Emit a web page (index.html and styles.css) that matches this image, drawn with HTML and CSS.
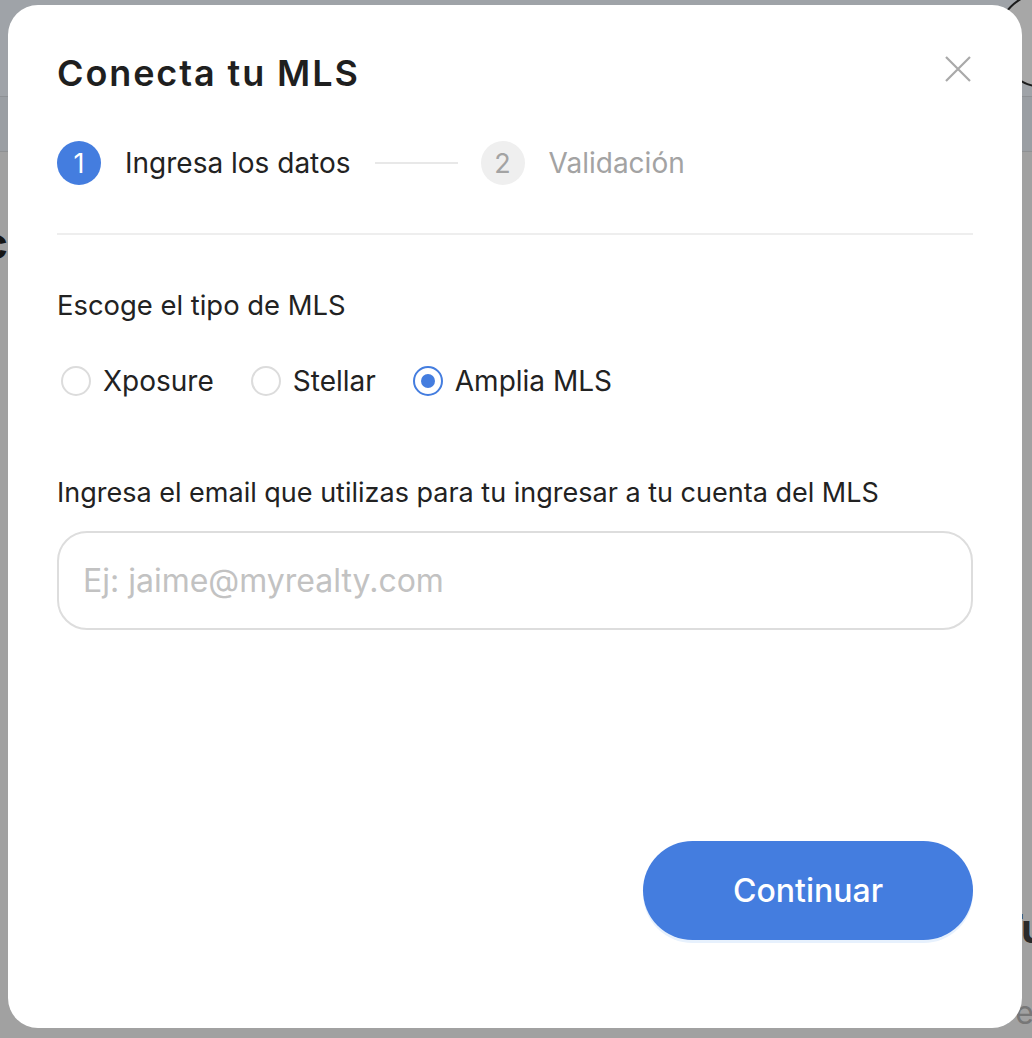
FILE: index.html
```html
<!DOCTYPE html>
<html lang="es">
<head>
    <meta charset="UTF-8">
    <meta name="viewport" content="width=device-width, initial-scale=1.0">
    <title>Conecta tu MLS</title>
    <link rel="stylesheet" href="styles.css">
</head>
<body>
    <div class="page">
        <header class="topbar">
            <span class="avatar"></span>
        </header>
        <nav class="subnav"></nav>
        <main class="page-main">
            <h2 class="page-title">Conexiones MLS c</h2>
            <div class="page-side">
                <strong class="side-title">Tu</strong>
                <span class="side-text">Ver</span>
            </div>
        </main>
    </div>

    <div class="overlay">
        <div class="modal">
            <div class="modal-header">
                <h1>Conecta tu MLS</h1>
                <button class="close" aria-label="Cerrar">
                    <svg width="26" height="26" viewBox="0 0 26 26">
                        <path d="M1 1 L25 25 M25 1 L1 25" stroke="#a9a9a9" stroke-width="2.2" fill="none"/>
                    </svg>
                </button>
            </div>

            <div class="stepper">
                <span class="step-num active">1</span>
                <span class="step-label">Ingresa los datos</span>
                <span class="step-line"></span>
                <span class="step-num">2</span>
                <span class="step-label muted">Validación</span>
            </div>

            <div class="form">
                <p class="field-label">Escoge el tipo de MLS</p>
                <div class="radios">
                    <label class="radio"><span class="dot"></span>Xposure</label>
                    <label class="radio"><span class="dot"></span>Stellar</label>
                    <label class="radio checked"><span class="dot"></span>Amplia MLS</label>
                </div>

                <p class="field-label email-label">Ingresa el email que utilizas para tu ingresar a tu cuenta del MLS</p>
                <input type="text" class="email" placeholder="Ej: jaime@myrealty.com">
            </div>

            <div class="actions">
                <button class="continue">Continuar</button>
            </div>
        </div>
    </div>
</body>
</html>
```

FILE: styles.css
```css
body {
    margin: 0;
    font-family: Inter, "Noto Sans", sans-serif;
    background-color: #a1a1a1;
    overflow: hidden;
}

.page {
    height: 1038px;
}

.topbar {
    height: 96px;
    background-color: #9fa3a8;
    border-bottom: 1px solid #8e9195;
    display: flex;
    justify-content: flex-end;
}

.avatar {
    width: 92px;
    height: 92px;
    margin-right: -60px;
    margin-top: -8px;
    border: 2px solid #1c1c1c;
    border-radius: 50%;
    background-color: #a7a7a7;
}

.subnav {
    height: 54px;
    background-color: #9a9ea3;
    border-bottom: 1px solid #8f9193;
}

.page-main {
    display: flex;
    justify-content: space-between;
    padding-top: 64px;
}

.page-title {
    margin: 0;
    font-size: 44px;
    color: #151515;
    white-space: nowrap;
    direction: rtl;
    width: 8px;
    overflow: hidden;
}

.page-side {
    display: flex;
    flex-direction: column;
    align-items: flex-end;
    padding-top: 688px;
    margin-right: -14px;
}

.side-title {
    font-size: 40px;
    color: #2a2a2a;
}

.side-text {
    margin-top: 40px;
    font-size: 32px;
    color: #777;
}

.overlay {
    position: fixed;
    inset: 0;
    padding: 5px 10px 10px 8px;
    display: flex;
}

.modal {
    flex: 1;
    background: #fff;
    border-radius: 30px;
    padding: 48px 49px 88px 49px;
    display: flex;
    flex-direction: column;
    color: #222;
}

.modal-header {
    display: flex;
    justify-content: space-between;
    align-items: flex-start;
}

.modal-header h1 {
    margin: 0;
    font-size: 36px;
    line-height: 40px;
    font-weight: 600;
    color: #1f1f1f;
    letter-spacing: 1.9px;
}

.close {
    border: none;
    background: none;
    padding: 0;
    margin: 3px 2px 0 0;
    cursor: pointer;
}

.stepper {
    display: flex;
    align-items: center;
    margin-top: 48px;
    padding-bottom: 48px;
    border-bottom: 2px solid #eeeeee;
}

.step-num {
    width: 44px;
    height: 44px;
    border-radius: 50%;
    background-color: #efefef;
    color: #a3a3a3;
    font-size: 27px;
    display: flex;
    align-items: center;
    justify-content: center;
}

.step-num.active {
    background-color: #447ddf;
    color: #fff;
}

.step-label {
    margin-left: 24px;
    font-size: 28px;
    color: #222;
}

.step-label.muted {
    color: #a3a3a3;
}

.step-line {
    width: 83px;
    height: 2px;
    background-color: #e8e8e8;
    margin: 0 23px 0 24px;
}

.form {
    display: flex;
    flex-direction: column;
}

.field-label {
    margin: 52px 0 0;
    font-size: 27.4px;
    line-height: 36px;
}

.radios {
    display: flex;
    gap: 37px;
    margin-top: 40px;
    padding-left: 4px;
}

.radio {
    display: flex;
    align-items: center;
    gap: 12px;
    font-size: 28px;
    line-height: 36px;
    cursor: pointer;
}

.dot {
    width: 30px;
    height: 30px;
    box-sizing: border-box;
    border: 2px solid #dcdcdc;
    border-radius: 50%;
    display: flex;
    align-items: center;
    justify-content: center;
}

.radio.checked .dot {
    border-color: #447ddf;
}

.radio.checked .dot::after {
    content: "";
    width: 14px;
    height: 14px;
    border-radius: 50%;
    background-color: #447ddf;
}

.email-label {
    margin-top: 76px;
    font-size: 27px;
}

.email {
    margin-top: 20px;
    width: 100%;
    height: 99px;
    box-sizing: border-box;
    border: 2px solid #dddddd;
    border-radius: 30px;
    padding: 0 24px;
    font-family: inherit;
    font-size: 32px;
    color: #222;
    outline: none;
}

.email::placeholder {
    color: #c2c2c2;
}

.actions {
    margin-top: auto;
    display: flex;
    justify-content: flex-end;
}

.continue {
    width: 330px;
    height: 99px;
    border: none;
    border-radius: 50px;
    background-color: #447ddf;
    color: #fff;
    font-family: inherit;
    font-size: 32px;
    font-weight: 500;
    box-shadow: 0 3px 0 #e7f1fd;
    cursor: pointer;
}
```
